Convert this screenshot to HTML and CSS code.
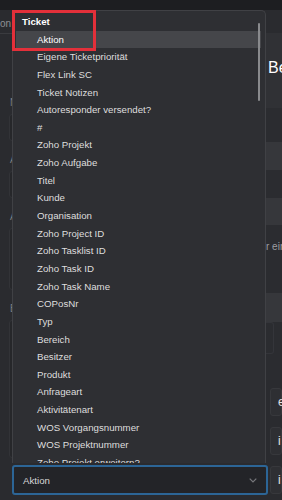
FILE: index.html
```html
<!DOCTYPE html>
<html lang="de">
<head>
<meta charset="utf-8">
<title>Ticket Feld</title>
<link rel="stylesheet" href="styles.css">
</head>
<body>
<div class="topbar"></div>
<div class="page">
  <section class="form">
    <div class="tabs"><span class="tab">on</span></div>
    <div class="fields">
      <div class="field">
        <label class="label">Name</label>
        <div class="input"></div>
      </div>
      <div class="field">
        <label class="label">Aktion</label>
        <div class="input"></div>
      </div>
      <div class="field">
        <label class="label">Anmerkung</label>
        <div class="input tall"></div>
      </div>
      <div class="field">
        <label class="label">Bedingung</label>
        <div class="input taller"></div>
      </div>
    </div>
    <div class="select">
      <span class="select-value">Aktion</span>
      <svg class="chevron" width="8" height="5" viewBox="0 0 8 5"><path d="M0.7 0.7 L4 4 L7.3 0.7" fill="none" stroke="#77787c" stroke-width="1.2"/></svg>
    </div>
  </section>
  <aside class="side">
    <div class="side-head"></div>
    <div class="side-title">Bearbeiten</div>
    <div class="band dark h34"></div>
    <div class="band light h28"></div>
    <div class="band dark h28"></div>
    <div class="band light h27"></div>
    <div class="band dark h68"><span class="hint">r ein</span></div>
    <div class="band light h29"></div>
    <div class="band dark h58"><div class="mini"></div></div>
    <div class="side-row"><span>e</span></div>
    <div class="side-row"><span>i</span></div>
    <div class="side-row"><span>i</span></div>
  </aside>
</div>

<div class="dropdown">
  <ul class="list">
    <li class="group">Ticket</li>
    <li class="item active">Aktion</li>
    <li class="item">Eigene Ticketpriorität</li>
    <li class="item">Flex Link SC</li>
    <li class="item">Ticket Notizen</li>
    <li class="item">Autoresponder versendet?</li>
    <li class="item">#</li>
    <li class="item">Zoho Projekt</li>
    <li class="item">Zoho Aufgabe</li>
    <li class="item">Titel</li>
    <li class="item">Kunde</li>
    <li class="item">Organisation</li>
    <li class="item">Zoho Project ID</li>
    <li class="item">Zoho Tasklist ID</li>
    <li class="item">Zoho Task ID</li>
    <li class="item">Zoho Task Name</li>
    <li class="item">COPosNr</li>
    <li class="item">Typ</li>
    <li class="item">Bereich</li>
    <li class="item">Besitzer</li>
    <li class="item">Produkt</li>
    <li class="item">Anfrageart</li>
    <li class="item">Aktivitätenart</li>
    <li class="item">WOS Vorgangsnummer</li>
    <li class="item">WOS Projektnummer</li>
    <li class="item">Zoho Projekt erweitern?</li>
  </ul>
  <div class="scrollbar"></div>
</div>
<div class="highlight-box"></div>
</body>
</html>
```
FILE: styles.css
```css
* { box-sizing: border-box; }
html, body {
  margin: 0;
  padding: 0;
}
body {
  width: 282px;
  height: 500px;
  overflow: hidden;
  background: #2a2b2f;
  font-family: "Liberation Sans", Arial, sans-serif;
  color: #dcdcdc;
  position: relative;
}
.topbar {
  height: 10px;
  background: #1d1e21;
}
.page {
  display: grid;
  grid-template-columns: 266px 1fr;
}
.form {
  display: flex;
  flex-direction: column;
}
.tabs {
  height: 24px;
  border-bottom: 1px solid #3a3b3f;
  display: flex;
  align-items: flex-end;
  padding-bottom: 3px;
}
.tab {
  font-size: 10px;
  line-height: 12px;
  color: #8e8f93;
}
.fields {
  display: flex;
  flex-direction: column;
  gap: 13px;
  padding: 63px 0 0 9px;
}
.field {
  display: flex;
  flex-direction: column;
  gap: 5px;
}
.label {
  font-size: 10px;
  line-height: 12px;
  color: #7e7f83;
  padding-left: 1px;
}
.input {
  height: 27px;
  background: #26272a;
  border: 1px solid #323337;
  border-radius: 3px;
}
.input.tall { height: 62px; }
.input.taller { height: 138px; }
.select {
  margin: 7px 0 0 12px;
  width: 256px;
  height: 30px;
  background: #232428;
  border: 2px solid #2c6596;
  border-radius: 3px;
  display: flex;
  align-items: center;
  justify-content: space-between;
  padding: 0 9px 0 9px;
}
.select-value {
  font-size: 9.7px;
  color: #d8d8d8;
}
.chevron { display: block; }

.side {
  display: flex;
  flex-direction: column;
  overflow: hidden;
}
.side-head { height: 23px; }
.side-title {
  height: 75px;
  background: #303135;
  font-size: 16px;
  line-height: 70px;
  color: #ffffff;
  white-space: nowrap;
  padding-left: 2px;
}
.band { flex: none; }
.band.dark { background: #2b2c30; }
.band.light { background: #36373b; }
.h27 { height: 27px; }
.h28 { height: 28px; }
.h29 { height: 29px; }
.h34 { height: 34px; }
.h58 { height: 58px; }
.h68 { height: 68px; }
.hint {
  display: block;
  padding-top: 17px;
  font-size: 10px;
  line-height: 10px;
  color: #9c9da1;
  white-space: nowrap;
}
.mini {
  margin: 0 0 0 0;
  height: 32px;
  width: 8px;
  border: 1px solid #34353a;
  border-left: none;
  border-radius: 0 3px 3px 0;
}
.side-row {
  height: 28px;
  margin: 8px 0 3px 4px;
  background: #2e2f33;
  border: 1px solid #37383c;
  border-radius: 3px;
  display: flex;
  align-items: center;
  padding-left: 7px;
  font-size: 12px;
  color: #e3e3e3;
}

.dropdown {
  position: absolute;
  left: 12px;
  top: 10px;
  width: 254px;
  height: 453px;
  background: #2e2f33;
  border: 1px solid #404145;
  border-bottom: none;
  border-radius: 5px 5px 0 0;
  overflow: hidden;
}
.list {
  list-style: none;
  margin: 0;
  padding: 2px 0 0 0;
}
.group, .item {
  height: 17.65px;
  line-height: 17.65px;
  font-size: 9.7px;
  white-space: nowrap;
}
.group {
  font-weight: bold;
  color: #ffffff;
  padding-left: 9px;
}
.item {
  color: #dedede;
  padding-left: 24px;
  margin: 0 4px 0 3px;
  padding-left: 21px;
}
.item.active {
  background: #45464a;
  color: #ffffff;
}
.scrollbar {
  position: absolute;
  right: 5px;
  top: 12px;
  width: 2px;
  height: 78px;
  border-radius: 1px;
  background: #898a8d;
}
.highlight-box {
  position: absolute;
  left: 12px;
  top: 10px;
  width: 84px;
  height: 41px;
  border: 3px solid #e3303a;
}
```
